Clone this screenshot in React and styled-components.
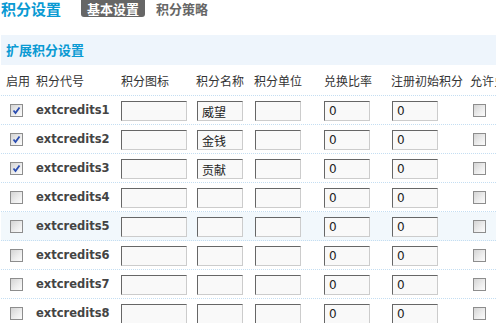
import styled, { createGlobalStyle } from 'styled-components';

const GlobalStyle = createGlobalStyle`
  html, body {
    margin: 0;
    padding: 0;
    background: #fff;
    overflow: hidden;
  }
  body {
    font-family: "Noto Sans CJK SC", "DejaVu Sans", sans-serif;
    font-size: 12px;
    color: #333;
  }
`;

const Page = styled.div`
  width: 496px;
  height: 323px;
  padding-left: 1px;
  box-sizing: border-box;
  overflow: hidden;
`;

const TitleBar = styled.div`
  display: flex;
  align-items: flex-start;
  height: 17px;
  margin-bottom: 18px;
`;

const Title = styled.h1`
  margin: 0;
  font-size: 15px;
  line-height: 17px;
  font-weight: bold;
  color: #0a9ad3;
  font-family: "Noto Sans CJK SC", sans-serif;
`;

const Tab = styled.span`
  font-size: 13px;
  font-weight: bold;
  line-height: 17px;
  padding: 0 6px;
  margin-left: ${p => p.$first ? '20px' : '5px'};
  background: ${p => p.$active ? '#666' : 'transparent'};
  color: ${p => p.$active ? '#fff' : '#666'};
  border-radius: 0 0 3px 3px;
  font-family: "Noto Sans CJK SC", sans-serif;
`;

const SectionHead = styled.div`
  height: 30px;
  line-height: 30px;
  padding-left: 5px;
  background: #eef5fc;
  color: #0a9ad3;
  font-weight: bold;
  font-size: 13px;
`;

const Row = styled.div`
  display: grid;
  grid-template-columns: 30px 85px 75px 58px 70px 67px 79px 1fr;
  align-items: center;
  height: ${p => p.$head ? '31px' : '29px'};
  box-sizing: border-box;
  border-bottom: 1px dotted #c4def2;
  background: ${p => p.$hover ? '#f2f8fc' : 'transparent'};
  overflow: hidden;
`;

const HeadCell = styled.div`
  padding-left: 5px;
  white-space: nowrap;
  color: #333;
  font-size: 12px;
`;

const Cell = styled.div`
  padding-left: ${p => p.$pad ?? 5}px;
  white-space: nowrap;
  display: flex;
  align-items: center;
`;

const Code = styled.span`
  font-family: "DejaVu Sans", sans-serif;
  font-weight: bold;
  font-size: 11.5px;
  color: #444;
`;

const Field = styled.input`
  width: ${p => p.$w}px;
  height: 20px;
  box-sizing: border-box;
  margin: 2px 0 0 0;
  padding: 0 4px;
  border: 1px solid;
  border-color: #666 #ccc #ccc #666;
  background: #f9f9f9;
  font-family: "DejaVu Sans", "Noto Sans CJK SC", sans-serif;
  font-size: 12px;
  color: #222;
  outline: none;
`;

const Box = styled.span`
  display: inline-block;
  position: relative;
  flex: none;
  width: 13px;
  height: 13px;
  box-sizing: border-box;
  border: 1px solid #8d8d8d;
  background: linear-gradient(135deg, #d4d4d4 0%, #eeeeee 60%, #fbfbfb 100%);
`;

const Tick = styled.svg`
  position: absolute;
  left: 1px;
  top: 1px;
`;

const CheckBox = ({ checked }) => (
  <Box>
    {checked && (
      <Tick width="9" height="9" viewBox="0 0 9 9">
        <path d="M1.5 4.5 L3.5 7 L7.5 1.5" fill="none" stroke="#2a4cb0" strokeWidth="1.8" />
      </Tick>
    )}
  </Box>
);

const headers = ['启用', '积分代号', '积分图标', '积分名称', '积分单位', '兑换比率', '注册初始积分', '允许兑换'];

const credits = [
  { id: 1, on: true, name: '威望' },
  { id: 2, on: true, name: '金钱' },
  { id: 3, on: true, name: '贡献' },
  { id: 4, on: false, name: '' },
  { id: 5, on: false, name: '', hover: true },
  { id: 6, on: false, name: '' },
  { id: 7, on: false, name: '' },
  { id: 8, on: false, name: '' },
];

export default function App() {
  return (
    <Page>
      <GlobalStyle />
      <TitleBar>
        <Title>积分设置</Title>
        <Tab $active $first>基本设置</Tab>
        <Tab>积分策略</Tab>
      </TitleBar>
      <SectionHead>扩展积分设置</SectionHead>
      <Row $head>
        {headers.map(h => <HeadCell key={h}>{h}</HeadCell>)}
      </Row>
      {credits.map(c => (
        <Row key={c.id} $hover={c.hover}>
          <Cell $pad={9}><CheckBox checked={c.on} /></Cell>
          <Cell><Code>extcredits{c.id}</Code></Cell>
          <Cell $pad={5}><Field $w={66} defaultValue="" /></Cell>
          <Cell $pad={6}><Field $w={46} defaultValue={c.name} /></Cell>
          <Cell $pad={6}><Field $w={46} defaultValue="" /></Cell>
          <Cell><Field $w={46} defaultValue="0" /></Cell>
          <Cell $pad={6}><Field $w={46} defaultValue="0" /></Cell>
          <Cell $pad={8}><CheckBox /></Cell>
        </Row>
      ))}
    </Page>
  );
}
